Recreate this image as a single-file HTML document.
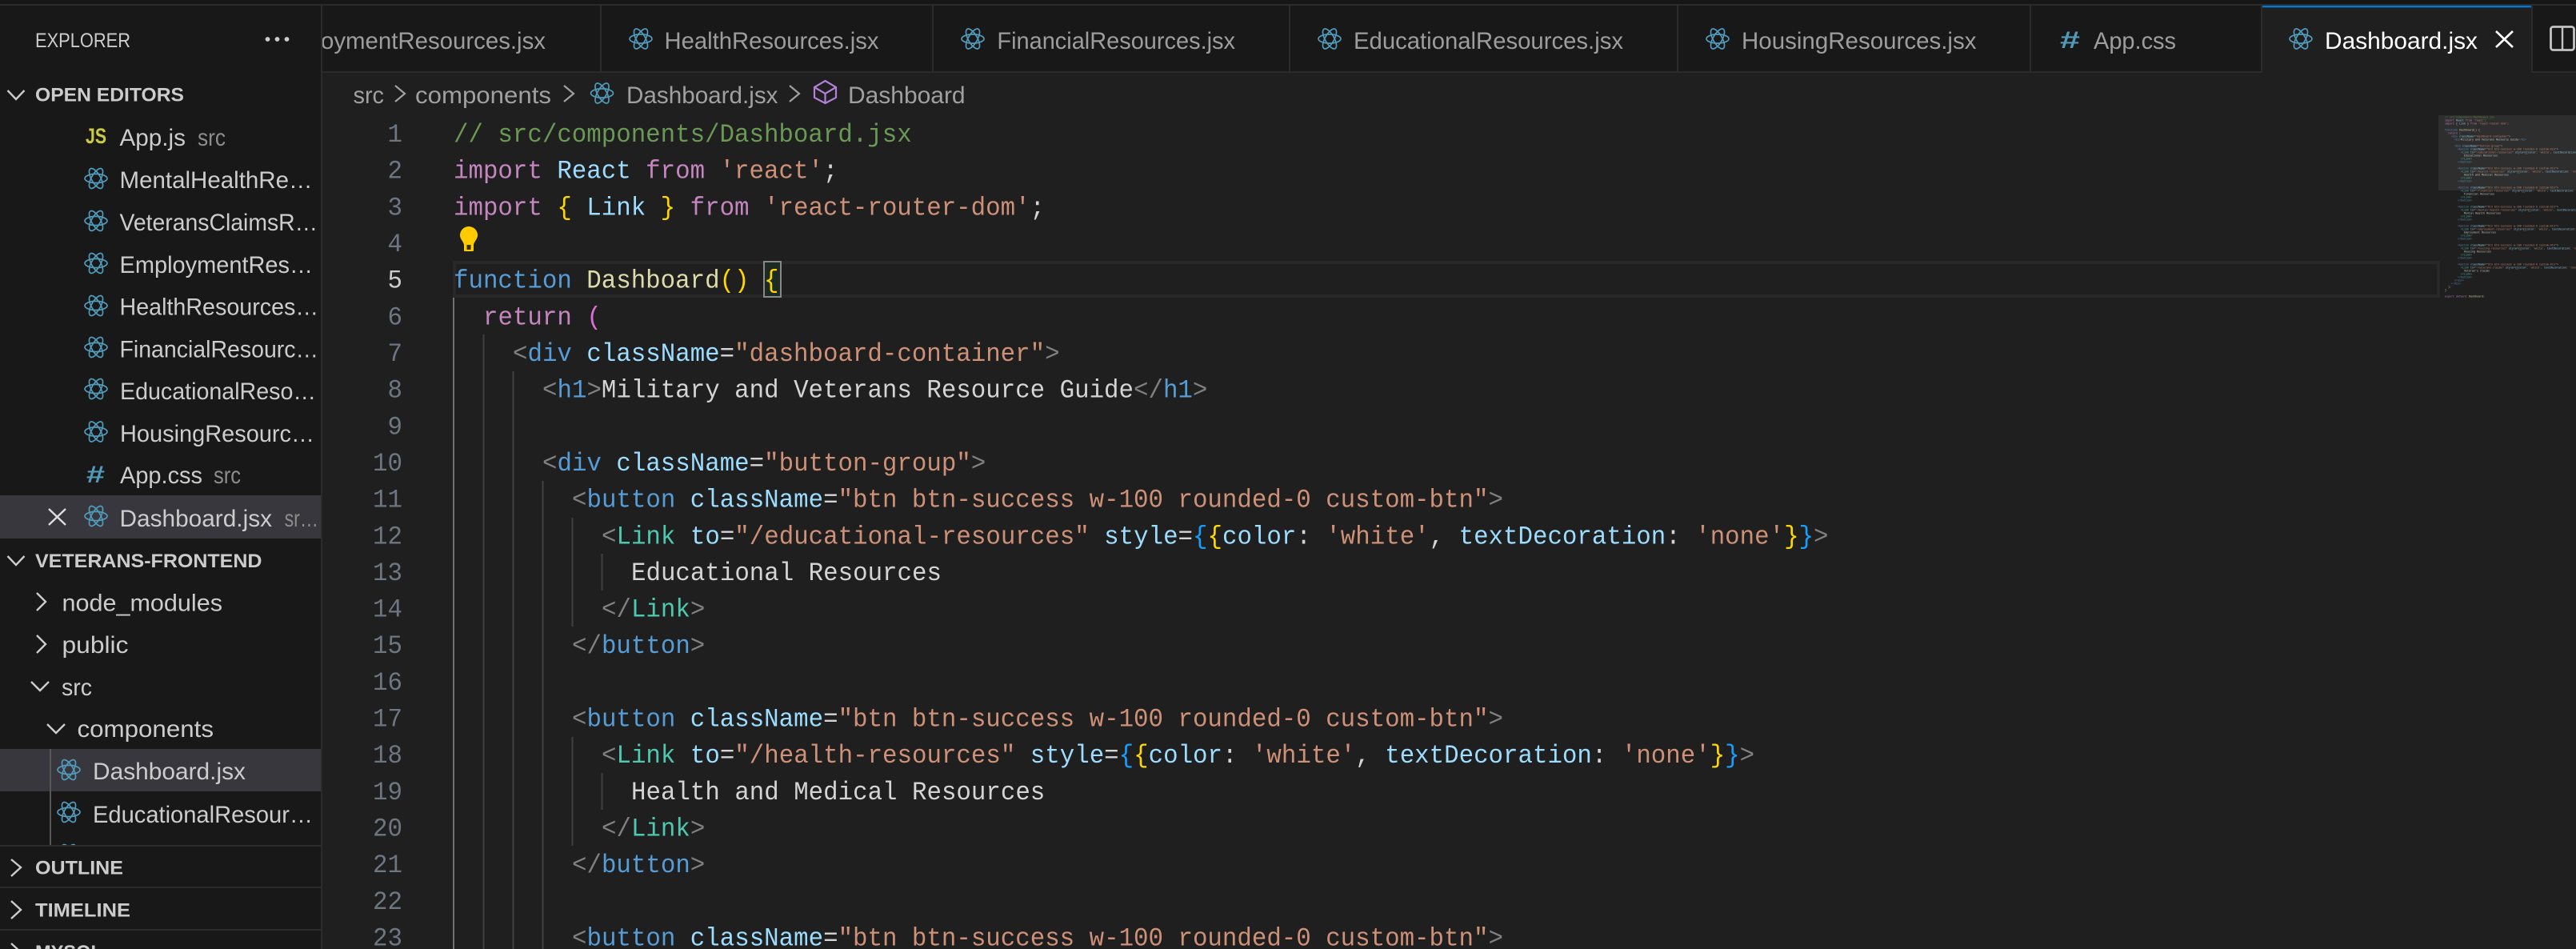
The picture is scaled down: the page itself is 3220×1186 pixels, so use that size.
<!DOCTYPE html>
<html lang="en"><head><meta charset="utf-8"><title>Dashboard.jsx</title>
<style>
html,body{margin:0;padding:0;background:#1f1f1f;width:3220px;height:1186px;overflow:hidden}
svg{display:block}
text{white-space:pre}
.ui{font-family:"Liberation Sans",sans-serif;font-size:29.5px;fill:#ccc}
.h{font-family:"Liberation Sans",sans-serif;font-size:24.5px;font-weight:700;fill:#ccc}
.d{fill:#8c8c8c}
.tb{fill:#9d9d9d}
.bc{fill:#a0a0a0}
.code{font-family:"Liberation Mono",monospace;font-size:32px;fill:#d4d4d4;transform-box:fill-box;transform-origin:0 50%;transform:scaleX(.9625)}
.ln{font-family:"Liberation Mono",monospace;font-size:32px;fill:#6e7681;text-anchor:end;transform-box:fill-box;transform-origin:100% 50%;transform:scaleX(.9625)}
.mm{font-family:"Liberation Mono",monospace;font-size:3.33px;fill:#d4d4d4}
.k{fill:#c586c0}.v{fill:#9cdcfe}.s{fill:#ce9178}.t{fill:#569cd6}.p{fill:#808080}.c{fill:#4ec9b0}.f{fill:#dcdcaa}.g{fill:#ffd700}.b{fill:#179fff}.m{fill:#da70d6}.cm{fill:#6a9955}
.chev{fill:none;stroke:#ccc;stroke-width:2.4}
</style></head><body>
<svg xmlns="http://www.w3.org/2000/svg" width="3220" height="1186" viewBox="0 0 3220 1186">
<defs>
<g id="r" fill="none" stroke="#519aba" stroke-width="1.7">
<ellipse rx="14" ry="5.6"/><ellipse rx="14" ry="5.6" transform="rotate(60)"/><ellipse rx="14" ry="5.6" transform="rotate(120)"/>
</g>
<clipPath id="tc"><rect x="403" y="7" width="340" height="82"/></clipPath>
<clipPath id="sc"><rect x="0" y="0" width="401" height="1056"/></clipPath>
</defs>

<rect width="3220" height="1186" fill="#1f1f1f"/>
<rect width="3220" height="5" fill="#161616"/>
<rect y="5" width="3220" height="2" fill="#2b2b2b"/>

<!-- tab bar -->
<rect x="403" y="7" width="2817" height="82" fill="#181818"/>
<rect x="403" y="89" width="2817" height="2" fill="#2b2b2b"/>
<rect x="750" y="7" width="2" height="82" fill="#2b2b2b"/>
<rect x="1165" y="7" width="2" height="82" fill="#2b2b2b"/>
<rect x="1611" y="7" width="2" height="82" fill="#2b2b2b"/>
<rect x="2096" y="7" width="2" height="82" fill="#2b2b2b"/>
<rect x="2537" y="7" width="2" height="82" fill="#2b2b2b"/>
<rect x="2826" y="7" width="2" height="84" fill="#2b2b2b"/>
<rect x="3164" y="7" width="2" height="84" fill="#2b2b2b"/>
<rect x="2828" y="7" width="336" height="84" fill="#1f1f1f"/>
<rect x="2828" y="7" width="336" height="2.4" fill="#0078d4"/>

<g clip-path="url(#tc)"><text class="ui tb" x="334" y="61" textLength="348" lengthAdjust="spacingAndGlyphs">EmploymentResources.jsx</text></g>
<use href="#r" x="801" y="48.5"/>
<text class="ui tb" x="830.5" y="61" textLength="268" lengthAdjust="spacingAndGlyphs">HealthResources.jsx</text>
<use href="#r" x="1216" y="48.5"/>
<text class="ui tb" x="1246.4" y="61" textLength="297.6" lengthAdjust="spacingAndGlyphs">FinancialResources.jsx</text>
<use href="#r" x="1662" y="48.5"/>
<text class="ui tb" x="1692" y="61" textLength="337" lengthAdjust="spacingAndGlyphs">EducationalResources.jsx</text>
<use href="#r" x="2147" y="48.5"/>
<text class="ui tb" x="2177" y="61" textLength="293.5" lengthAdjust="spacingAndGlyphs">HousingResources.jsx</text>
<text x="2575" y="60" font-family="Liberation Sans,sans-serif" font-size="30" font-weight="700" fill="#519aba" textLength="25" lengthAdjust="spacingAndGlyphs">#</text>
<text class="ui tb" x="2617" y="61" textLength="103" lengthAdjust="spacingAndGlyphs">App.css</text>
<use href="#r" x="2876" y="48.5"/>
<text class="ui" style="fill:#fff" x="2906" y="61" textLength="191" lengthAdjust="spacingAndGlyphs">Dashboard.jsx</text>
<path d="M3120 39L3141 59M3141 39L3120 59" stroke="#fff" stroke-width="2.6" fill="none"/>
<rect x="3188.5" y="33.5" width="29" height="29" rx="3" fill="none" stroke="#c4c4c4" stroke-width="2.8"/>
<path d="M3203 33v30" stroke="#c4c4c4" stroke-width="2.4"/>

<!-- breadcrumb -->
<text class="ui bc" x="441.5" y="129" textLength="38.5" lengthAdjust="spacingAndGlyphs">src</text>
<path d="M494 107L506 117L494 127" fill="none" stroke="#a0a0a0" stroke-width="2.2"/>
<text class="ui bc" x="519" y="129" textLength="170" lengthAdjust="spacingAndGlyphs">components</text>
<path d="M705 107L717 117L705 127" fill="none" stroke="#a0a0a0" stroke-width="2.2"/>
<use href="#r" x="752.5" y="116.5"/>
<text class="ui bc" x="783" y="129" textLength="189.5" lengthAdjust="spacingAndGlyphs">Dashboard.jsx</text>
<path d="M987 107L999 117L987 127" fill="none" stroke="#a0a0a0" stroke-width="2.2"/>
<path d="M1031.5 101L1045 109V122L1031.5 129L1018 122V109ZM1018 109L1031.5 117L1045 109M1031.5 117V129" fill="none" stroke="#b180d7" stroke-width="2.2"/>
<text class="ui bc" x="1060" y="129" textLength="146.6" lengthAdjust="spacingAndGlyphs">Dashboard</text>

<!-- current line -->
<rect x="568" y="328" width="2480" height="42" fill="none" stroke="#282828" stroke-width="4"/>
<rect x="955" y="327" width="21" height="44" fill="#1b2a22" stroke="#888" stroke-width="2"/>

<!-- indent guides -->
<rect x="566" y="372" width="2" height="814" fill="#707070"/>
<rect x="603.5" y="418" width="2" height="768" fill="#404040"/>
<rect x="640.5" y="464" width="2" height="722" fill="#404040"/>
<rect x="677.5" y="601" width="2" height="585" fill="#404040"/>
<rect x="714.5" y="647" width="2" height="136" fill="#404040"/>
<rect x="714.5" y="921" width="2" height="136" fill="#404040"/>
<rect x="751.5" y="692" width="2" height="46" fill="#404040"/>
<rect x="751.5" y="966" width="2" height="46" fill="#404040"/>

<!-- line numbers -->
<text class="ln" x="503" y="177">1</text><text class="ln" x="503" y="222.7">2</text><text class="ln" x="503" y="268.3">3</text><text class="ln" x="503" y="314">4</text><text class="ln" style="fill:#ccc" x="503" y="359.6">5</text><text class="ln" x="503" y="405.3">6</text><text class="ln" x="503" y="451">7</text><text class="ln" x="503" y="496.6">8</text><text class="ln" x="503" y="542.3">9</text><text class="ln" x="503" y="588">10</text><text class="ln" x="503" y="633.6">11</text><text class="ln" x="503" y="679.3">12</text><text class="ln" x="503" y="724.9">13</text><text class="ln" x="503" y="770.6">14</text><text class="ln" x="503" y="816.2">15</text><text class="ln" x="503" y="861.9">16</text><text class="ln" x="503" y="907.6">17</text><text class="ln" x="503" y="953.2">18</text><text class="ln" x="503" y="998.9">19</text><text class="ln" x="503" y="1044.5">20</text><text class="ln" x="503" y="1090.2">21</text><text class="ln" x="503" y="1135.9">22</text><text class="ln" x="503" y="1181.5">23</text>

<!-- code -->
<text class="code cm" x="567" y="177">// src/components/Dashboard.jsx</text>
<text class="code" x="567" y="222.7"><tspan class="k">import</tspan> <tspan class="v">React</tspan> <tspan class="k">from</tspan> <tspan class="s">'react'</tspan>;</text>
<text class="code" x="567" y="268.3"><tspan class="k">import</tspan> <tspan class="g">{</tspan> <tspan class="v">Link</tspan> <tspan class="g">}</tspan> <tspan class="k">from</tspan> <tspan class="s">'react-router-dom'</tspan>;</text>
<path d="M586 283a11 11 0 0 1 11 11c0 5-4 7-5 12v7a1 1 0 0 1-1 1h-10a1 1 0 0 1-1-1v-7c-1-5-5-7-5-12a11 11 0 0 1 11-11z" fill="#ffcc00"/>
<rect x="583.5" y="306" width="5" height="6" fill="#3a3000"/>
<text class="code" x="567" y="359.6"><tspan class="t">function</tspan> <tspan class="f">Dashboard</tspan><tspan class="g">()</tspan> <tspan class="g">{</tspan></text>
<text class="code" x="604" y="405.3"><tspan class="k">return</tspan> <tspan class="m">(</tspan></text>
<text class="code" x="641" y="451"><tspan class="p">&lt;</tspan><tspan class="t">div</tspan> <tspan class="v">className</tspan>=<tspan class="s">"dashboard-container"</tspan><tspan class="p">&gt;</tspan></text>
<text class="code" x="678" y="496.6"><tspan class="p">&lt;</tspan><tspan class="t">h1</tspan><tspan class="p">&gt;</tspan>Military and Veterans Resource Guide<tspan class="p">&lt;/</tspan><tspan class="t">h1</tspan><tspan class="p">&gt;</tspan></text>
<text class="code" x="678" y="588"><tspan class="p">&lt;</tspan><tspan class="t">div</tspan> <tspan class="v">className</tspan>=<tspan class="s">"button-group"</tspan><tspan class="p">&gt;</tspan></text>
<text class="code" x="715" y="633.6"><tspan class="p">&lt;</tspan><tspan class="t">button</tspan> <tspan class="v">className</tspan>=<tspan class="s">"btn btn-success w-100 rounded-0 custom-btn"</tspan><tspan class="p">&gt;</tspan></text>
<text class="code" x="752" y="679.3"><tspan class="p">&lt;</tspan><tspan class="c">Link</tspan> <tspan class="v">to</tspan>=<tspan class="s">"/educational-resources"</tspan> <tspan class="v">style</tspan>=<tspan class="b">{</tspan><tspan class="g">{</tspan><tspan class="v">color</tspan>: <tspan class="s">'white'</tspan>, <tspan class="v">textDecoration</tspan>: <tspan class="s">'none'</tspan><tspan class="g">}</tspan><tspan class="b">}</tspan><tspan class="p">&gt;</tspan></text>
<text class="code" x="789" y="724.9">Educational Resources</text>
<text class="code" x="752" y="770.6"><tspan class="p">&lt;/</tspan><tspan class="c">Link</tspan><tspan class="p">&gt;</tspan></text>
<text class="code" x="715" y="816.2"><tspan class="p">&lt;/</tspan><tspan class="t">button</tspan><tspan class="p">&gt;</tspan></text>
<text class="code" x="715" y="907.6"><tspan class="p">&lt;</tspan><tspan class="t">button</tspan> <tspan class="v">className</tspan>=<tspan class="s">"btn btn-success w-100 rounded-0 custom-btn"</tspan><tspan class="p">&gt;</tspan></text>
<text class="code" x="752" y="953.2"><tspan class="p">&lt;</tspan><tspan class="c">Link</tspan> <tspan class="v">to</tspan>=<tspan class="s">"/health-resources"</tspan> <tspan class="v">style</tspan>=<tspan class="b">{</tspan><tspan class="g">{</tspan><tspan class="v">color</tspan>: <tspan class="s">'white'</tspan>, <tspan class="v">textDecoration</tspan>: <tspan class="s">'none'</tspan><tspan class="g">}</tspan><tspan class="b">}</tspan><tspan class="p">&gt;</tspan></text>
<text class="code" x="789" y="998.9">Health and Medical Resources</text>
<text class="code" x="752" y="1044.5"><tspan class="p">&lt;/</tspan><tspan class="c">Link</tspan><tspan class="p">&gt;</tspan></text>
<text class="code" x="715" y="1090.2"><tspan class="p">&lt;/</tspan><tspan class="t">button</tspan><tspan class="p">&gt;</tspan></text>
<text class="code" x="715" y="1181.5"><tspan class="p">&lt;</tspan><tspan class="t">button</tspan> <tspan class="v">className</tspan>=<tspan class="s">"btn btn-success w-100 rounded-0 custom-btn"</tspan><tspan class="p">&gt;</tspan></text>

<!-- minimap -->
<rect x="3048" y="144" width="172" height="94" fill="#2e2e2e"/>
<g class="mm" opacity=".9">
<text class="mm cm" x="3056" y="147.5">// src/components/Dashboard.jsx</text>
<text class="mm" x="3056" y="151.5"><tspan class="k">import</tspan> <tspan class="v">React</tspan> <tspan class="k">from</tspan> <tspan class="s">'react'</tspan>;</text>
<text class="mm" x="3056" y="155.5"><tspan class="k">import</tspan> { <tspan class="v">Link</tspan> } <tspan class="k">from</tspan> <tspan class="s">'react-router-dom'</tspan>;</text>
<text class="mm" x="3056" y="163.5"><tspan class="t">function</tspan> <tspan class="f">Dashboard</tspan>() {</text>
<text class="mm k" x="3060" y="167.5">return (</text>
<text class="mm" x="3064" y="171.5"><tspan class="t">&lt;div</tspan> <tspan class="v">className</tspan>=<tspan class="s">"dashboard-container"</tspan>&gt;</text>
<text class="mm" x="3068" y="175.5"><tspan class="t">&lt;h1&gt;</tspan>Military and Veterans Resource Guide<tspan class="t">&lt;/h1&gt;</tspan></text>
<text class="mm" x="3068" y="183.5"><tspan class="t">&lt;div</tspan> <tspan class="v">className</tspan>=<tspan class="s">"button-group"</tspan>&gt;</text>
<text class="mm" x="3072" y="187.5"><tspan class="t">&lt;button</tspan> <tspan class="v">className</tspan>=<tspan class="s">"btn btn-success w-100 rounded-0 custom-btn"</tspan>&gt;</text>
<text class="mm" x="3076" y="191.5"><tspan class="c">&lt;Link</tspan> <tspan class="v">to</tspan>=<tspan class="s">"/educational-resources"</tspan> <tspan class="v">style</tspan>={{<tspan class="v">color</tspan>: <tspan class="s">'white'</tspan>, <tspan class="v">textDecoration</tspan>: <tspan class="s">'none'</tspan>}}&gt;</text>
<text class="mm" x="3080" y="195.5">Educational Resources</text>
<text class="mm c" x="3076" y="199.5">&lt;/Link&gt;</text>
<text class="mm t" x="3072" y="203.5">&lt;/button&gt;</text>
<text class="mm" x="3072" y="211.5"><tspan class="t">&lt;button</tspan> <tspan class="v">className</tspan>=<tspan class="s">"btn btn-success w-100 rounded-0 custom-btn"</tspan>&gt;</text>
<text class="mm" x="3076" y="215.5"><tspan class="c">&lt;Link</tspan> <tspan class="v">to</tspan>=<tspan class="s">"/health-resources"</tspan> <tspan class="v">style</tspan>={{<tspan class="v">color</tspan>: <tspan class="s">'white'</tspan>, <tspan class="v">textDecoration</tspan>: <tspan class="s">'none'</tspan>}}&gt;</text>
<text class="mm" x="3080" y="219.5">Health and Medical Resources</text>
<text class="mm c" x="3076" y="223.5">&lt;/Link&gt;</text>
<text class="mm t" x="3072" y="227.5">&lt;/button&gt;</text>
<text class="mm" x="3072" y="235.5"><tspan class="t">&lt;button</tspan> <tspan class="v">className</tspan>=<tspan class="s">"btn btn-success w-100 rounded-0 custom-btn"</tspan>&gt;</text>
<text class="mm" x="3076" y="239.5"><tspan class="c">&lt;Link</tspan> <tspan class="v">to</tspan>=<tspan class="s">"/financial-resources"</tspan> <tspan class="v">style</tspan>={{<tspan class="v">color</tspan>: <tspan class="s">'white'</tspan>, <tspan class="v">textDecoration</tspan>: <tspan class="s">'none'</tspan>}}&gt;</text>
<text class="mm" x="3080" y="243.5">Financial Resources</text>
<text class="mm c" x="3076" y="247.5">&lt;/Link&gt;</text>
<text class="mm t" x="3072" y="251.5">&lt;/button&gt;</text>
<text class="mm" x="3072" y="259.5"><tspan class="t">&lt;button</tspan> <tspan class="v">className</tspan>=<tspan class="s">"btn btn-success w-100 rounded-0 custom-btn"</tspan>&gt;</text>
<text class="mm" x="3076" y="263.5"><tspan class="c">&lt;Link</tspan> <tspan class="v">to</tspan>=<tspan class="s">"/mental-health-resources"</tspan> <tspan class="v">style</tspan>={{<tspan class="v">color</tspan>: <tspan class="s">'white'</tspan>, <tspan class="v">textDecoration</tspan>: <tspan class="s">'none'</tspan>}}&gt;</text>
<text class="mm" x="3080" y="267.5">Mental Health Resources</text>
<text class="mm c" x="3076" y="271.5">&lt;/Link&gt;</text>
<text class="mm t" x="3072" y="275.5">&lt;/button&gt;</text>
<text class="mm" x="3072" y="283.5"><tspan class="t">&lt;button</tspan> <tspan class="v">className</tspan>=<tspan class="s">"btn btn-success w-100 rounded-0 custom-btn"</tspan>&gt;</text>
<text class="mm" x="3076" y="287.5"><tspan class="c">&lt;Link</tspan> <tspan class="v">to</tspan>=<tspan class="s">"/employment-resources"</tspan> <tspan class="v">style</tspan>={{<tspan class="v">color</tspan>: <tspan class="s">'white'</tspan>, <tspan class="v">textDecoration</tspan>: <tspan class="s">'none'</tspan>}}&gt;</text>
<text class="mm" x="3080" y="291.5">Employment Resources</text>
<text class="mm c" x="3076" y="295.5">&lt;/Link&gt;</text>
<text class="mm t" x="3072" y="299.5">&lt;/button&gt;</text>
<text class="mm" x="3072" y="307.5"><tspan class="t">&lt;button</tspan> <tspan class="v">className</tspan>=<tspan class="s">"btn btn-success w-100 rounded-0 custom-btn"</tspan>&gt;</text>
<text class="mm" x="3076" y="311.5"><tspan class="c">&lt;Link</tspan> <tspan class="v">to</tspan>=<tspan class="s">"/housing-resources"</tspan> <tspan class="v">style</tspan>={{<tspan class="v">color</tspan>: <tspan class="s">'white'</tspan>, <tspan class="v">textDecoration</tspan>: <tspan class="s">'none'</tspan>}}&gt;</text>
<text class="mm" x="3080" y="315.5">Housing Resources</text>
<text class="mm c" x="3076" y="319.5">&lt;/Link&gt;</text>
<text class="mm t" x="3072" y="323.5">&lt;/button&gt;</text>
<text class="mm" x="3072" y="331.5"><tspan class="t">&lt;button</tspan> <tspan class="v">className</tspan>=<tspan class="s">"btn btn-success w-100 rounded-0 custom-btn"</tspan>&gt;</text>
<text class="mm" x="3076" y="335.5"><tspan class="c">&lt;Link</tspan> <tspan class="v">to</tspan>=<tspan class="s">"/veterans-claims"</tspan> <tspan class="v">style</tspan>={{<tspan class="v">color</tspan>: <tspan class="s">'white'</tspan>, <tspan class="v">textDecoration</tspan>: <tspan class="s">'none'</tspan>}}&gt;</text>
<text class="mm" x="3080" y="339.5">Veteran's Claims</text>
<text class="mm c" x="3076" y="343.5">&lt;/Link&gt;</text>
<text class="mm t" x="3072" y="347.5">&lt;/button&gt;</text>
<text class="mm t" x="3068" y="351.5">&lt;/div&gt;</text>
<text class="mm t" x="3064" y="355.5">&lt;/div&gt;</text>
<text class="mm" x="3060" y="359.5">);</text>
<text class="mm" x="3056" y="363.5">}</text>
<text class="mm" x="3056" y="371.5"><tspan class="k">export default</tspan> <tspan class="f">Dashboard</tspan>;</text>
</g>

<!-- sidebar -->
<rect x="0" y="7" width="401" height="1179" fill="#181818"/>
<rect x="401" y="7" width="2" height="1179" fill="#2b2b2b"/>
<text x="44" y="59" font-family="Liberation Sans,sans-serif" font-size="25" fill="#ccc" textLength="119" lengthAdjust="spacingAndGlyphs">EXPLORER</text>
<circle cx="334.5" cy="49" r="2.9" fill="#ccc"/><circle cx="346.5" cy="49" r="2.9" fill="#ccc"/><circle cx="358.5" cy="49" r="2.9" fill="#ccc"/>

<path class="chev" d="M9.5 113L20 124L30.5 113"/>
<text class="h" x="44" y="126.7" textLength="186" lengthAdjust="spacingAndGlyphs">OPEN EDITORS</text>

<text x="107" y="179" font-family="Liberation Sans,sans-serif" font-size="27" font-weight="700" fill="#cbcb41" textLength="26" lengthAdjust="spacingAndGlyphs">JS</text>
<text class="ui" x="149.5" y="182" textLength="82.5" lengthAdjust="spacingAndGlyphs">App.js</text>
<text class="ui d" x="247" y="182" textLength="35" lengthAdjust="spacingAndGlyphs">src</text>
<use href="#r" x="120" y="223"/><text class="ui" x="149.5" y="235" textLength="241" lengthAdjust="spacingAndGlyphs">MentalHealthRe…</text>
<use href="#r" x="120" y="276"/><text class="ui" x="149.5" y="288" textLength="247.5" lengthAdjust="spacingAndGlyphs">VeteransClaimsR…</text>
<use href="#r" x="120" y="329"/><text class="ui" x="149.5" y="341" textLength="241.5" lengthAdjust="spacingAndGlyphs">EmploymentRes…</text>
<use href="#r" x="120" y="382"/><text class="ui" x="149.5" y="393.6" textLength="248.5" lengthAdjust="spacingAndGlyphs">HealthResources…</text>
<use href="#r" x="120" y="434"/><text class="ui" x="149.5" y="446.5" textLength="248.5" lengthAdjust="spacingAndGlyphs">FinancialResourc…</text>
<use href="#r" x="120" y="486"/><text class="ui" x="150" y="499" textLength="245" lengthAdjust="spacingAndGlyphs">EducationalReso…</text>
<use href="#r" x="120" y="539.5"/><text class="ui" x="150" y="552" textLength="243" lengthAdjust="spacingAndGlyphs">HousingResourc…</text>
<text x="108" y="603" font-family="Liberation Sans,sans-serif" font-size="30" font-weight="700" fill="#519aba" textLength="23" lengthAdjust="spacingAndGlyphs">#</text>
<text class="ui" x="150" y="604" textLength="103" lengthAdjust="spacingAndGlyphs">App.css</text>
<text class="ui d" x="267" y="604" textLength="34" lengthAdjust="spacingAndGlyphs">src</text>

<rect x="0" y="619" width="401" height="54" fill="#37373d"/>
<path d="M61 636L82 656M82 636L61 656" stroke="#ddd" stroke-width="2.4" fill="none"/>
<use href="#r" x="120" y="645"/>
<text class="ui" x="149.5" y="658" textLength="190.5" lengthAdjust="spacingAndGlyphs">Dashboard.jsx</text>
<text class="ui d" x="355.6" y="658" textLength="42.4" lengthAdjust="spacingAndGlyphs">sr…</text>

<path class="chev" d="M9.5 695L20 706L30.5 695"/>
<text class="h" x="44" y="709" textLength="283.5" lengthAdjust="spacingAndGlyphs">VETERANS-FRONTEND</text>

<path class="chev" d="M46 741L57 752L46 763"/>
<text class="ui" x="77.5" y="763.7" textLength="200.5" lengthAdjust="spacingAndGlyphs">node_modules</text>
<path class="chev" d="M46 794L57 805L46 816"/>
<text class="ui" x="77.5" y="816" textLength="83" lengthAdjust="spacingAndGlyphs">public</text>
<path class="chev" d="M39 852L50 863L61 852"/>
<text class="ui" x="77" y="869" textLength="38" lengthAdjust="spacingAndGlyphs">src</text>
<path class="chev" d="M59 905L70 916L81 905"/>
<text class="ui" x="96.5" y="921" textLength="170.5" lengthAdjust="spacingAndGlyphs">components</text>

<rect x="0" y="936" width="401" height="53" fill="#37373d"/>
<rect x="62" y="936" width="2" height="120" fill="#585858"/>
<use href="#r" x="86" y="962"/>
<text class="ui" x="116" y="974" textLength="191" lengthAdjust="spacingAndGlyphs">Dashboard.jsx</text>
<use href="#r" x="86" y="1015"/>
<text class="ui" x="116" y="1028" textLength="275" lengthAdjust="spacingAndGlyphs">EducationalResour…</text>
<g clip-path="url(#sc)"><use href="#r" x="86" y="1068"/></g>

<rect x="0" y="1056" width="401" height="2" fill="#2b2b2b"/>
<path class="chev" d="M14 1074L26 1084L14 1095"/>
<text class="h" x="44" y="1092.5" textLength="110" lengthAdjust="spacingAndGlyphs">OUTLINE</text>
<rect x="0" y="1108" width="401" height="2" fill="#2b2b2b"/>
<path class="chev" d="M14 1126L26 1137L14 1148"/>
<text class="h" x="44" y="1145.6" textLength="119" lengthAdjust="spacingAndGlyphs">TIMELINE</text>
<rect x="0" y="1161" width="401" height="2" fill="#2b2b2b"/>
<path class="chev" d="M14 1179L26 1190L14 1201"/>
<text class="h" x="44" y="1198" textLength="84" lengthAdjust="spacingAndGlyphs">MYSQL</text>
</svg>
</body></html>
